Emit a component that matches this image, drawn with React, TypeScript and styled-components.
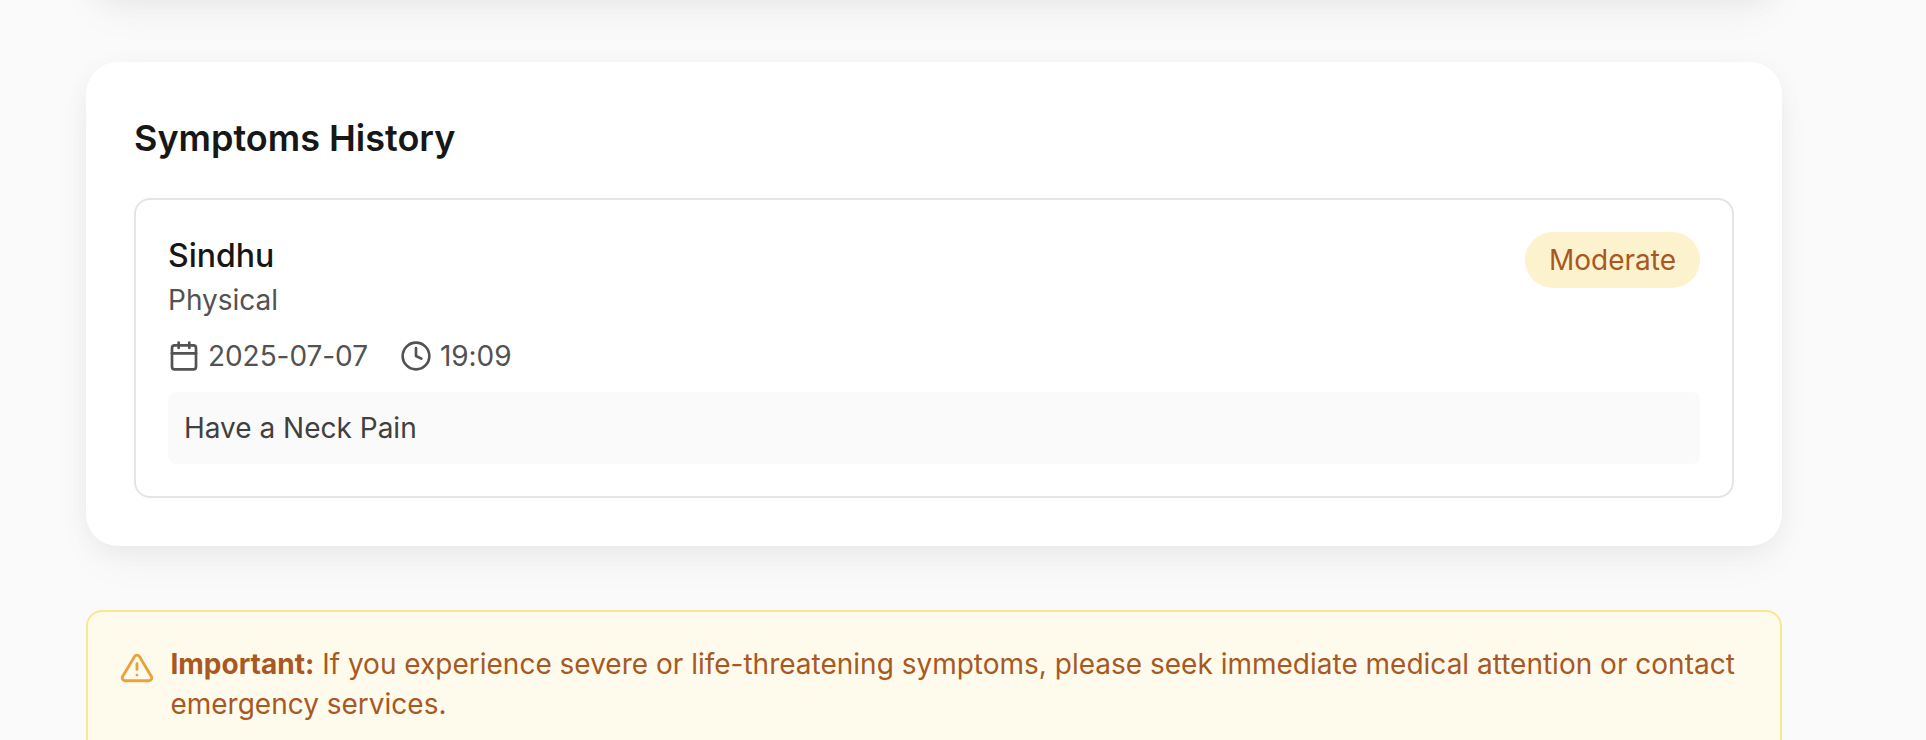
import React from "react";
import styled, { createGlobalStyle } from "styled-components";
import { Calendar, Clock } from "lucide-react";
import { FiAlertTriangle } from "react-icons/fi";

const GlobalStyle = createGlobalStyle`
  * { box-sizing: border-box; }
  body { margin: 0; background: #fafafa; height: 740px; overflow: hidden; font-family: Inter, sans-serif; color: #171717; }
  h2, h3, p { margin: 0; }
`;

const Page = styled.main`
  width: 1696px;
  height: 740px;
  margin-left: 86px;
  display: flex;
  flex-direction: column;
`;

const Card = styled.section`
  flex-shrink: 0;
  background: #fff;
  border-radius: 32px;
  padding: 48px;
  box-shadow: 0 4px 30px -6px rgba(0, 0, 0, 0.07), 0 20px 40px -4px rgba(0, 0, 0, 0.04);
`;

const PreviousCard = styled(Card)`
  height: 296px;
  margin-top: -298px;
  margin-bottom: 64px;
`;

const Title = styled.h2`
  font-size: 36px;
  line-height: 56px;
  font-weight: 600;
  margin-bottom: 32px;
`;

const Entry = styled.article`
  border: 2px solid #e5e5e5;
  border-radius: 16px;
  padding: 32px;
`;

const EntryHeader = styled.div`
  display: flex;
  justify-content: space-between;
  align-items: flex-start;
`;

const Name = styled.h3`
  font-size: 32px;
  line-height: 48px;
  font-weight: 500;
`;

const Category = styled.p`
  font-size: 28px;
  line-height: 40px;
  color: #525252;
`;

const Badge = styled.span`
  border-radius: 999px;
  padding: 8px 24px;
  font-size: 28px;
  line-height: 40px;
  background: #fcf2cd;
  color: #a85823;
`;

const Meta = styled.div`
  display: flex;
  gap: 32px;
  margin: 16px 0;
  font-size: 28px;
  line-height: 40px;
  letter-spacing: -0.06px;
  color: #525252;
`;

const MetaItem = styled.span`
  display: flex;
  align-items: center;
  gap: 8px;
`;

const Note = styled.p`
  padding: 16px;
  border-radius: 8px;
  background: #fafafa;
  color: #404040;
  font-size: 28px;
  line-height: 40px;
`;

const Alert = styled.aside`
  flex-shrink: 0;
  display: flex;
  gap: 16px;
  margin-top: 64px;
  padding: 32px;
  border: 2px solid #fae692;
  border-radius: 16px;
  background: #fefbec;
  color: #a85823;
  font-size: 28px;
  line-height: 40px;
`;

const AlertIcon = styled(FiAlertTriangle)`
  flex-shrink: 0;
  margin-top: 7px;
  margin-left: 0.4px;
  color: #e9a23b;
`;

export default function App() {
  return (
    <>
      <GlobalStyle />
      <Page>
        <PreviousCard />
        <Card>
          <Title>Symptoms History</Title>
          <Entry>
            <EntryHeader>
              <div>
                <Name>Sindhu</Name>
                <Category>Physical</Category>
              </div>
              <Badge>Moderate</Badge>
            </EntryHeader>
            <Meta>
              <MetaItem><Calendar size={32} />2025-07-07</MetaItem>
              <MetaItem><Clock size={32} />19:09</MetaItem>
            </Meta>
            <Note>Have a Neck Pain</Note>
          </Entry>
        </Card>
        <Alert>
          <AlertIcon size={34} />
          <p><strong>Important:</strong> If you experience severe or life-threatening symptoms, please seek immediate medical attention or contact emergency services.</p>
        </Alert>
      </Page>
    </>
  );
}
